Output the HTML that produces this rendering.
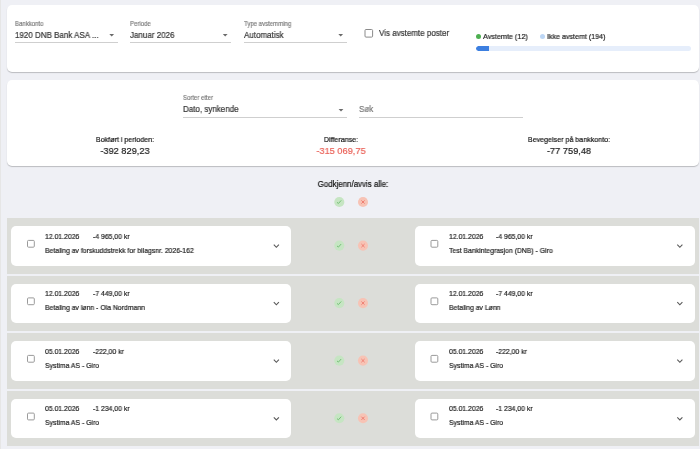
<!DOCTYPE html>
<html><head><meta charset="utf-8">
<style>
*{box-sizing:border-box;margin:0;padding:0}
html,body{width:700px;height:449px;overflow:hidden}
body{background:#eff0f5;font-family:"Liberation Sans",sans-serif;color:#222;position:relative}
.a{position:absolute;white-space:nowrap;line-height:1;will-change:transform;-webkit-text-stroke:0.2px currentColor}
.s{position:absolute;overflow:visible}
.strip{position:absolute;left:0;top:0;width:1px;height:449px;background:#e6e6e6}
.card{position:absolute;left:7px;width:692px;background:#fff;border-radius:5px;box-shadow:0 1px 1px rgba(0,0,0,.22)}
.ul{position:absolute;height:1px;background:#cfcfcf}
.row{position:absolute;left:7px;width:692px;height:55.5px;background:#dcddd9}
.it{position:absolute;width:280px;height:39.5px;background:#fff;border-radius:5px}
.cb{position:absolute;border:1px solid #9a9a9a;border-radius:1px}
</style></head><body>
<div class="strip"></div>
<div class="card" style="top:5px;height:67px"></div>
<div class="a" style="left:15.00px;top:19.85px;font-size:7.0px;color:#7c7c7c;transform:scaleX(0.86);transform-origin:0 0;">Bankkonto</div>
<div class="a" style="left:15.00px;top:30.69px;font-size:8.6px;color:#333;transform:scaleX(0.93);transform-origin:0 0;">1920 DNB Bank ASA ...</div>
<svg class="s" style="left:107px;top:32px" width="8" height="6" viewBox="0 0 8 6"><g transform="translate(0.70 0.20)"><path d="M1.6 1.8 L6.4 1.8 L4 4.2 Z" fill="#6a6a6a"/></g></svg>
<div class="ul" style="left:15px;top:42px;width:102.5px"></div>
<div class="a" style="left:129.50px;top:19.85px;font-size:7.0px;color:#7c7c7c;transform:scaleX(0.86);transform-origin:0 0;">Periode</div>
<div class="a" style="left:129.50px;top:30.69px;font-size:8.6px;color:#333;transform:scaleX(0.93);transform-origin:0 0;">Januar 2026</div>
<svg class="s" style="left:221px;top:32px" width="8" height="6" viewBox="0 0 8 6"><g transform="translate(0.20 0.20)"><path d="M1.6 1.8 L6.4 1.8 L4 4.2 Z" fill="#6a6a6a"/></g></svg>
<div class="ul" style="left:129.5px;top:42px;width:101.5px"></div>
<div class="a" style="left:244.00px;top:19.85px;font-size:7.0px;color:#7c7c7c;transform:scaleX(0.86);transform-origin:0 0;">Type avstemming</div>
<div class="a" style="left:244.00px;top:30.69px;font-size:8.6px;color:#333;transform:scaleX(0.93);transform-origin:0 0;">Automatisk</div>
<svg class="s" style="left:336px;top:32px" width="8" height="6" viewBox="0 0 8 6"><g transform="translate(0.70 0.20)"><path d="M1.6 1.8 L6.4 1.8 L4 4.2 Z" fill="#6a6a6a"/></g></svg>
<div class="ul" style="left:244px;top:42px;width:102.5px"></div>
<svg class="s" style="left:363px;top:28px" width="11" height="11"><rect x="2.00" y="1.50" width="7.60" height="7.60" rx="1" fill="none" stroke="#8a8a8a" stroke-width="1"/></svg>
<div class="a" style="left:379.00px;top:28.69px;font-size:8.6px;color:#333;transform:scaleX(0.93);transform-origin:0 0;">Vis avstemte poster</div>
<div style="position:absolute;left:476px;top:33.5px;width:5px;height:5px;border-radius:50%;background:#4caf50"></div>
<div class="a" style="left:483.00px;top:32.64px;font-size:7.6px;color:#222;transform:scaleX(0.95);transform-origin:0 0;">Avstemte (12)</div>
<div style="position:absolute;left:539.5px;top:33.5px;width:5px;height:5px;border-radius:50%;background:#bcd6f5"></div>
<div class="a" style="left:547.00px;top:32.64px;font-size:7.6px;color:#222;transform:scaleX(0.935);transform-origin:0 0;">Ikke avstemt (194)</div>
<div style="position:absolute;left:476px;top:45.5px;width:215px;height:5px;border-radius:3px;background:#e6eefb;overflow:hidden"><div style="width:13px;height:5px;background:#3c7fe0;border-radius:3px 0 0 3px"></div></div>
<div class="card" style="top:80px;height:86px"></div>
<div class="a" style="left:183.00px;top:94.25px;font-size:7.0px;color:#7c7c7c;transform:scaleX(0.86);transform-origin:0 0;">Sorter etter</div>
<div class="a" style="left:183.00px;top:104.99px;font-size:8.6px;color:#333;transform:scaleX(0.93);transform-origin:0 0;">Dato, synkende</div>
<svg class="s" style="left:337px;top:107px" width="8" height="6" viewBox="0 0 8 6"><g transform="translate(0.00 0.30)"><path d="M1.6 1.8 L6.4 1.8 L4 4.2 Z" fill="#6a6a6a"/></g></svg>
<div class="ul" style="left:183px;top:117px;width:164px"></div>
<div class="a" style="left:359.00px;top:104.99px;font-size:8.6px;color:#7a7a7a;transform:scaleX(0.93);transform-origin:0 0;">Søk</div>
<div class="ul" style="left:359px;top:117px;width:164px"></div>
<div class="a" style="left:-24.80px;width:300px;text-align:center;top:135.66px;font-size:7.7px;color:#111;transform:scaleX(0.925);transform-origin:50% 0;">Bokført i perioden:</div>
<div class="a" style="left:-24.80px;width:300px;text-align:center;top:146.59px;font-size:9.3px;color:#222;transform:scaleX(0.99);transform-origin:50% 0;">-392 829,23</div>
<div class="a" style="left:191.00px;width:300px;text-align:center;top:135.66px;font-size:7.7px;color:#111;transform:scaleX(0.925);transform-origin:50% 0;">Differanse:</div>
<div class="a" style="left:191.00px;width:300px;text-align:center;top:146.59px;font-size:9.3px;color:#ea6259;transform:scaleX(0.99);transform-origin:50% 0;">-315 069,75</div>
<div class="a" style="left:419.00px;width:300px;text-align:center;top:135.66px;font-size:7.7px;color:#111;transform:scaleX(0.925);transform-origin:50% 0;">Bevegelser på bankkonto:</div>
<div class="a" style="left:419.00px;width:300px;text-align:center;top:146.59px;font-size:9.3px;color:#222;transform:scaleX(0.99);transform-origin:50% 0;">-77 759,48</div>
<div class="a" style="left:203.00px;width:300px;text-align:center;top:179.75px;font-size:8.3px;color:#111;transform:scaleX(0.95);transform-origin:50% 0;">Godkjenn/avvis alle:</div>
<svg class="s" style="left:333px;top:196px" width="12" height="12" viewBox="0 0 12 12"><g transform="translate(0.30 0.00)"><circle cx="6" cy="6" r="5.05" fill="#c6e5c3"/><path d="M3.7 6.3 L5.1 7.5 L7.9 4.4" fill="none" stroke="#70bf72" stroke-width="0.95"/></g></svg>
<svg class="s" style="left:357px;top:196px" width="12" height="12" viewBox="0 0 12 12"><g transform="translate(0.00 0.00)"><circle cx="6" cy="6" r="5.05" fill="#f7c3b5"/><path d="M4.4 4.4 L7.6 7.6 M7.6 4.4 L4.4 7.6" fill="none" stroke="#ee7b6f" stroke-width="0.95"/></g></svg>
<div class="row" style="top:218px"></div>
<div class="it" style="left:11px;top:226px"></div>
<svg class="s" style="left:26px;top:238px" width="10" height="10"><rect x="1.50" y="2.40" width="6.80" height="6.80" rx="1" fill="none" stroke="#9a9a9a" stroke-width="1"/></svg>
<div class="a" style="left:45.00px;top:232.72px;font-size:7.5px;color:#222;transform:scaleX(0.915);transform-origin:0 0;">12.01.2026</div>
<div class="a" style="left:92.90px;top:232.72px;font-size:7.5px;color:#222;transform:scaleX(0.915);transform-origin:0 0;">-4 965,00 kr</div>
<div class="a" style="left:45.00px;top:246.53px;font-size:7.5px;color:#222;transform:scaleX(0.915);transform-origin:0 0;">Betaling av forskuddstrekk for bilagsnr. 2026-162</div>
<svg class="s" style="left:272px;top:243px" width="8" height="6" viewBox="0 0 8 6"><g transform="translate(0.35 0.00)"><path d="M1.45 1.6 L4 4.3 L6.55 1.6" fill="none" stroke="#5a5a5a" stroke-width="1.1"/></g></svg>
<div class="it" style="left:415px;top:226px"></div>
<svg class="s" style="left:429px;top:238px" width="10" height="10"><rect x="2.00" y="2.40" width="6.80" height="6.80" rx="1" fill="none" stroke="#9a9a9a" stroke-width="1"/></svg>
<div class="a" style="left:448.50px;top:232.72px;font-size:7.5px;color:#222;transform:scaleX(0.915);transform-origin:0 0;">12.01.2026</div>
<div class="a" style="left:496.40px;top:232.72px;font-size:7.5px;color:#222;transform:scaleX(0.915);transform-origin:0 0;">-4 965,00 kr</div>
<div class="a" style="left:448.50px;top:246.53px;font-size:7.5px;color:#222;transform:scaleX(0.915);transform-origin:0 0;">Test Bankintegrasjon (DNB) - Giro</div>
<svg class="s" style="left:675px;top:243px" width="8" height="6" viewBox="0 0 8 6"><g transform="translate(0.85 0.00)"><path d="M1.45 1.6 L4 4.3 L6.55 1.6" fill="none" stroke="#5a5a5a" stroke-width="1.1"/></g></svg>
<svg class="s" style="left:333px;top:239px" width="12" height="12" viewBox="0 0 12 12"><g transform="translate(0.30 0.60)"><circle cx="6" cy="6" r="5.05" fill="#c6e5c3"/><path d="M3.7 6.3 L5.1 7.5 L7.9 4.4" fill="none" stroke="#70bf72" stroke-width="0.95"/></g></svg>
<svg class="s" style="left:357px;top:239px" width="12" height="12" viewBox="0 0 12 12"><g transform="translate(0.00 0.60)"><circle cx="6" cy="6" r="5.05" fill="#f7c3b5"/><path d="M4.4 4.4 L7.6 7.6 M7.6 4.4 L4.4 7.6" fill="none" stroke="#ee7b6f" stroke-width="0.95"/></g></svg>
<div class="row" style="top:275.5px"></div>
<div class="it" style="left:11px;top:283.5px"></div>
<svg class="s" style="left:26px;top:296px" width="10" height="10"><rect x="1.50" y="1.90" width="6.80" height="6.80" rx="1" fill="none" stroke="#9a9a9a" stroke-width="1"/></svg>
<div class="a" style="left:45.00px;top:290.23px;font-size:7.5px;color:#222;transform:scaleX(0.915);transform-origin:0 0;">12.01.2026</div>
<div class="a" style="left:92.90px;top:290.23px;font-size:7.5px;color:#222;transform:scaleX(0.915);transform-origin:0 0;">-7 449,00 kr</div>
<div class="a" style="left:45.00px;top:304.02px;font-size:7.5px;color:#222;transform:scaleX(0.915);transform-origin:0 0;">Betaling av lønn - Ola Nordmann</div>
<svg class="s" style="left:272px;top:300px" width="8" height="6" viewBox="0 0 8 6"><g transform="translate(0.35 0.50)"><path d="M1.45 1.6 L4 4.3 L6.55 1.6" fill="none" stroke="#5a5a5a" stroke-width="1.1"/></g></svg>
<div class="it" style="left:415px;top:283.5px"></div>
<svg class="s" style="left:429px;top:296px" width="10" height="10"><rect x="2.00" y="1.90" width="6.80" height="6.80" rx="1" fill="none" stroke="#9a9a9a" stroke-width="1"/></svg>
<div class="a" style="left:448.50px;top:290.23px;font-size:7.5px;color:#222;transform:scaleX(0.915);transform-origin:0 0;">12.01.2026</div>
<div class="a" style="left:496.40px;top:290.23px;font-size:7.5px;color:#222;transform:scaleX(0.915);transform-origin:0 0;">-7 449,00 kr</div>
<div class="a" style="left:448.50px;top:304.02px;font-size:7.5px;color:#222;transform:scaleX(0.915);transform-origin:0 0;">Betaling av Lønn</div>
<svg class="s" style="left:675px;top:300px" width="8" height="6" viewBox="0 0 8 6"><g transform="translate(0.85 0.50)"><path d="M1.45 1.6 L4 4.3 L6.55 1.6" fill="none" stroke="#5a5a5a" stroke-width="1.1"/></g></svg>
<svg class="s" style="left:333px;top:297px" width="12" height="12" viewBox="0 0 12 12"><g transform="translate(0.30 0.10)"><circle cx="6" cy="6" r="5.05" fill="#c6e5c3"/><path d="M3.7 6.3 L5.1 7.5 L7.9 4.4" fill="none" stroke="#70bf72" stroke-width="0.95"/></g></svg>
<svg class="s" style="left:357px;top:297px" width="12" height="12" viewBox="0 0 12 12"><g transform="translate(0.00 0.10)"><circle cx="6" cy="6" r="5.05" fill="#f7c3b5"/><path d="M4.4 4.4 L7.6 7.6 M7.6 4.4 L4.4 7.6" fill="none" stroke="#ee7b6f" stroke-width="0.95"/></g></svg>
<div class="row" style="top:333px"></div>
<div class="it" style="left:11px;top:341px"></div>
<svg class="s" style="left:26px;top:353px" width="10" height="10"><rect x="1.50" y="2.40" width="6.80" height="6.80" rx="1" fill="none" stroke="#9a9a9a" stroke-width="1"/></svg>
<div class="a" style="left:45.00px;top:347.73px;font-size:7.5px;color:#222;transform:scaleX(0.915);transform-origin:0 0;">05.01.2026</div>
<div class="a" style="left:92.90px;top:347.73px;font-size:7.5px;color:#222;transform:scaleX(0.915);transform-origin:0 0;">-222,00 kr</div>
<div class="a" style="left:45.00px;top:361.52px;font-size:7.5px;color:#222;transform:scaleX(0.915);transform-origin:0 0;">Systima AS - Giro</div>
<svg class="s" style="left:272px;top:358px" width="8" height="6" viewBox="0 0 8 6"><g transform="translate(0.35 0.00)"><path d="M1.45 1.6 L4 4.3 L6.55 1.6" fill="none" stroke="#5a5a5a" stroke-width="1.1"/></g></svg>
<div class="it" style="left:415px;top:341px"></div>
<svg class="s" style="left:429px;top:353px" width="10" height="10"><rect x="2.00" y="2.40" width="6.80" height="6.80" rx="1" fill="none" stroke="#9a9a9a" stroke-width="1"/></svg>
<div class="a" style="left:448.50px;top:347.73px;font-size:7.5px;color:#222;transform:scaleX(0.915);transform-origin:0 0;">05.01.2026</div>
<div class="a" style="left:496.40px;top:347.73px;font-size:7.5px;color:#222;transform:scaleX(0.915);transform-origin:0 0;">-222,00 kr</div>
<div class="a" style="left:448.50px;top:361.52px;font-size:7.5px;color:#222;transform:scaleX(0.915);transform-origin:0 0;">Systima AS - Giro</div>
<svg class="s" style="left:675px;top:358px" width="8" height="6" viewBox="0 0 8 6"><g transform="translate(0.85 0.00)"><path d="M1.45 1.6 L4 4.3 L6.55 1.6" fill="none" stroke="#5a5a5a" stroke-width="1.1"/></g></svg>
<svg class="s" style="left:333px;top:354px" width="12" height="12" viewBox="0 0 12 12"><g transform="translate(0.30 0.60)"><circle cx="6" cy="6" r="5.05" fill="#c6e5c3"/><path d="M3.7 6.3 L5.1 7.5 L7.9 4.4" fill="none" stroke="#70bf72" stroke-width="0.95"/></g></svg>
<svg class="s" style="left:357px;top:354px" width="12" height="12" viewBox="0 0 12 12"><g transform="translate(0.00 0.60)"><circle cx="6" cy="6" r="5.05" fill="#f7c3b5"/><path d="M4.4 4.4 L7.6 7.6 M7.6 4.4 L4.4 7.6" fill="none" stroke="#ee7b6f" stroke-width="0.95"/></g></svg>
<div class="row" style="top:390.7px"></div>
<div class="it" style="left:11px;top:398.7px"></div>
<svg class="s" style="left:26px;top:411px" width="10" height="10"><rect x="1.50" y="2.10" width="6.80" height="6.80" rx="1" fill="none" stroke="#9a9a9a" stroke-width="1"/></svg>
<div class="a" style="left:45.00px;top:405.43px;font-size:7.5px;color:#222;transform:scaleX(0.915);transform-origin:0 0;">05.01.2026</div>
<div class="a" style="left:92.90px;top:405.43px;font-size:7.5px;color:#222;transform:scaleX(0.915);transform-origin:0 0;">-1 234,00 kr</div>
<div class="a" style="left:45.00px;top:419.22px;font-size:7.5px;color:#222;transform:scaleX(0.915);transform-origin:0 0;">Systima AS - Giro</div>
<svg class="s" style="left:272px;top:415px" width="8" height="6" viewBox="0 0 8 6"><g transform="translate(0.35 0.70)"><path d="M1.45 1.6 L4 4.3 L6.55 1.6" fill="none" stroke="#5a5a5a" stroke-width="1.1"/></g></svg>
<div class="it" style="left:415px;top:398.7px"></div>
<svg class="s" style="left:429px;top:411px" width="10" height="10"><rect x="2.00" y="2.10" width="6.80" height="6.80" rx="1" fill="none" stroke="#9a9a9a" stroke-width="1"/></svg>
<div class="a" style="left:448.50px;top:405.43px;font-size:7.5px;color:#222;transform:scaleX(0.915);transform-origin:0 0;">05.01.2026</div>
<div class="a" style="left:496.40px;top:405.43px;font-size:7.5px;color:#222;transform:scaleX(0.915);transform-origin:0 0;">-1 234,00 kr</div>
<div class="a" style="left:448.50px;top:419.22px;font-size:7.5px;color:#222;transform:scaleX(0.915);transform-origin:0 0;">Systima AS - Giro</div>
<svg class="s" style="left:675px;top:415px" width="8" height="6" viewBox="0 0 8 6"><g transform="translate(0.85 0.70)"><path d="M1.45 1.6 L4 4.3 L6.55 1.6" fill="none" stroke="#5a5a5a" stroke-width="1.1"/></g></svg>
<svg class="s" style="left:333px;top:412px" width="12" height="12" viewBox="0 0 12 12"><g transform="translate(0.30 0.30)"><circle cx="6" cy="6" r="5.05" fill="#c6e5c3"/><path d="M3.7 6.3 L5.1 7.5 L7.9 4.4" fill="none" stroke="#70bf72" stroke-width="0.95"/></g></svg>
<svg class="s" style="left:357px;top:412px" width="12" height="12" viewBox="0 0 12 12"><g transform="translate(0.00 0.30)"><circle cx="6" cy="6" r="5.05" fill="#f7c3b5"/><path d="M4.4 4.4 L7.6 7.6 M7.6 4.4 L4.4 7.6" fill="none" stroke="#ee7b6f" stroke-width="0.95"/></g></svg>
</body></html>
